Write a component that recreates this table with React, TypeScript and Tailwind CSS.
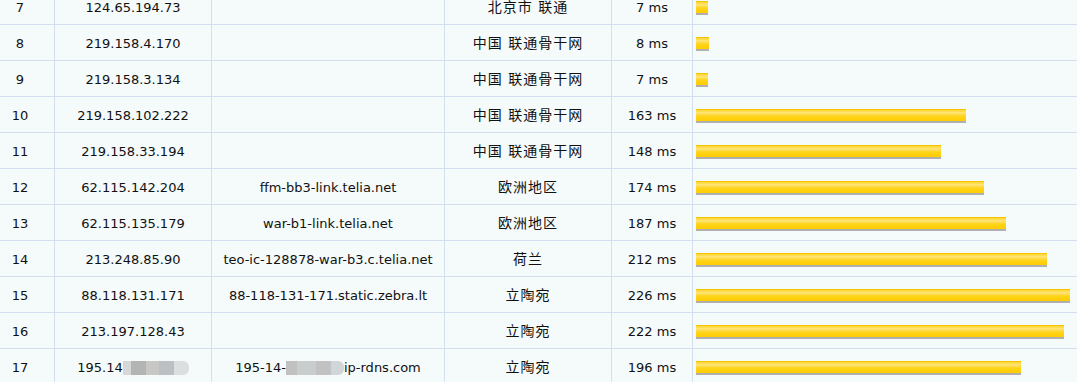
const rows = [
  { n: 7, ip: "124.65.194.73", host: "", loc: "北京市 联通", ms: 7 },
  { n: 8, ip: "219.158.4.170", host: "", loc: "中国 联通骨干网", ms: 8 },
  { n: 9, ip: "219.158.3.134", host: "", loc: "中国 联通骨干网", ms: 7 },
  { n: 10, ip: "219.158.102.222", host: "", loc: "中国 联通骨干网", ms: 163 },
  { n: 11, ip: "219.158.33.194", host: "", loc: "中国 联通骨干网", ms: 148 },
  { n: 12, ip: "62.115.142.204", host: "ffm-bb3-link.telia.net", loc: "欧洲地区", ms: 174 },
  { n: 13, ip: "62.115.135.179", host: "war-b1-link.telia.net", loc: "欧洲地区", ms: 187 },
  { n: 14, ip: "213.248.85.90", host: "teo-ic-128878-war-b3.c.telia.net", loc: "荷兰", ms: 212 },
  { n: 15, ip: "88.118.131.171", host: "88-118-131-171.static.zebra.lt", loc: "立陶宛", ms: 226 },
  { n: 16, ip: "213.197.128.43", host: "", loc: "立陶宛", ms: 222 },
];

const cell = "h-full flex items-center justify-center pt-[2px] border-r border-[#d3dff0] shrink-0";

function Bar({ ms }: { ms: number }) {
  return (
    <div
      className="h-[14px] flex flex-col"
      style={{ width: Math.round(ms * 1.656) }}
    >
      <div className="h-[12px] border-t border-[#f5c400] bg-[linear-gradient(to_bottom,#ffd52a_0%,#ffe47a_25%,#ffd41c_55%,#ffcc00_100%)]" />
      <div className="h-[2px] bg-[#b0b0b0]" />
    </div>
  );
}

function Blur({ parts }: { parts: [string, number][] }) {
  return (
    <span className="inline-flex h-[14px] items-stretch rounded-r-md overflow-hidden blur-[0.6px] align-middle">
      {parts.map(([c, w], i) => (
        <span key={i} style={{ width: w, background: c }} />
      ))}
    </span>
  );
}

function Row({
  n,
  ip,
  host,
  loc,
  ms,
}: {
  n: number;
  ip: React.ReactNode;
  host: React.ReactNode;
  loc: string;
  ms: number;
}) {
  return (
    <div className="flex h-[36px] border-b border-[#d3dff0]">
      <div className={`${cell} w-[55px] justify-start`}>
        <span className="w-[40px] text-center">{n}</span>
      </div>
      <div className={`${cell} w-[157px]`}>{ip}</div>
      <div className={`${cell} w-[233px]`}>{host}</div>
      <div className={`${cell} w-[167px] text-[14px] tracking-[1px]`}>{loc}</div>
      <div className={`${cell} w-[81px]`}>{ms} ms</div>
      <div className="h-full flex items-center pl-[3px] pt-[2px] flex-1">
        <Bar ms={ms} />
      </div>
    </div>
  );
}

export default function App() {
  return (
    <div className="w-[1077px] h-[382px] overflow-hidden bg-[#f5fafb] text-[13px] text-[#111] font-['DejaVu_Sans','Noto_Sans_CJK_SC',sans-serif]">
      <div className="-mt-[11px]">
        {rows.map((r) => (
          <Row key={r.n} {...r} />
        ))}
        <Row
          n={17}
          ip={
            <span className="flex items-center">
              195.14
              <Blur
                parts={[
                  ["#d6d8d8", 8],
                  ["#b4b4b4", 15],
                  ["#c9c7c6", 13],
                  ["#bcc0c2", 15],
                  ["#dcdfdf", 15],
                ]}
              />
            </span>
          }
          host={
            <span className="flex items-center">
              195-14-
              <Blur
                parts={[
                  ["#c1c1c1", 11],
                  ["#c9cdce", 19],
                  ["#c2c2c2", 15],
                  ["#d0d5d7", 13],
                ]}
              />
              ip-rdns.com
            </span>
          }
          loc="立陶宛"
          ms={196}
        />
      </div>
    </div>
  );
}
